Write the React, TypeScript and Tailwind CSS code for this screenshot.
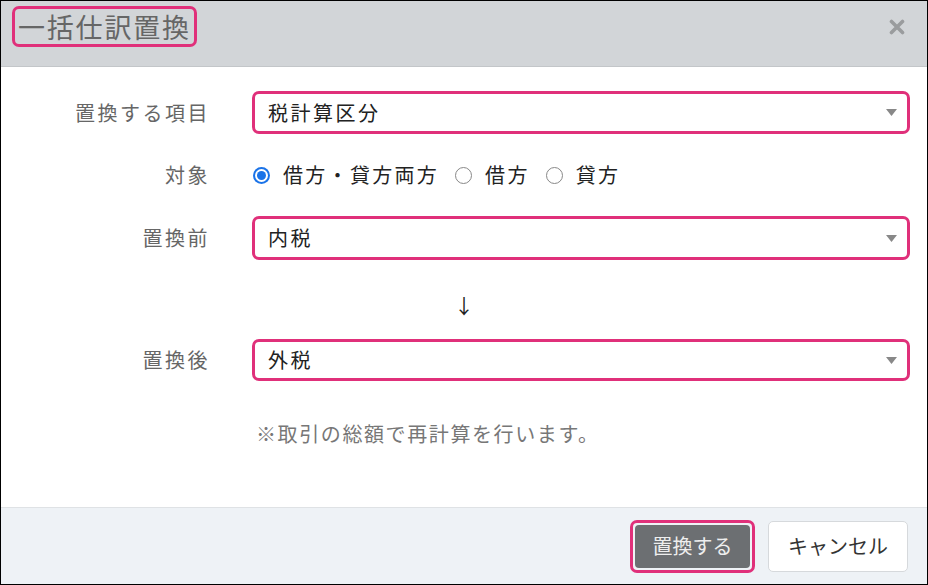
import React from "react";

const font = { fontFamily: '"Noto Sans CJK JP", "Noto Sans", sans-serif' };

function Select({ value, h }: { value: string; h: string }) {
  return (
    <div className={`flex-1 ${h} mr-[17px] border-[3px] border-[#e0307a] rounded-[7px] bg-white flex items-center pl-[13px] pr-[10px]`}>
      <span className="text-[20px] tracking-[2.5px] text-[#222] flex-1 leading-none">{value}</span>
      <svg width="11" height="7" viewBox="0 0 11 7"><path d="M0 0 L11 0 L5.5 7 Z" fill="#888" /></svg>
    </div>
  );
}

function Radio({ checked, label }: { checked?: boolean; label: string }) {
  return (
    <div className="flex items-center">
      {checked ? (
        <span className="w-[17px] h-[17px] rounded-full bg-[#1a73e8] flex items-center justify-center">
          <span className="w-[13px] h-[13px] rounded-full bg-white flex items-center justify-center">
            <span className="w-[9px] h-[9px] rounded-full bg-[#1a73e8]" />
          </span>
        </span>
      ) : (
        <span className="w-[17px] h-[17px] rounded-full border-[1.5px] border-[#888] bg-white" />
      )}
      <span className="ml-[13px] text-[20px] tracking-[2.3px] text-[#222]">{label}</span>
    </div>
  );
}

const label = "w-[209px] text-right text-[20px] tracking-[2.5px] text-[#666]";

export default function App() {
  return (
    <div style={font} className="w-[928px] h-[585px] border border-black bg-white flex flex-col overflow-hidden">
      <div className="h-[66px] bg-[#d2d5d8] border-b border-[#c3c6c9] flex items-start pt-[5px] pl-[11px] pr-[22px] shrink-0">
        <div className="border-[3px] border-[#e0307a] rounded-[7px] h-[41px] w-[185px] flex items-center pl-[3px]">
          <span className="text-[27px] text-[#666] leading-none tracking-[1.8px]">一括仕訳置換</span>
        </div>
        <div className="flex-1" />
        <svg className="mt-[13px]" width="16" height="16" viewBox="0 0 16 16">
          <path d="M2.5 2.5 L13.5 13.5 M13.5 2.5 L2.5 13.5" stroke="#9a9c9e" strokeWidth="3.6" strokeLinecap="round" />
        </svg>
      </div>
      <div className="flex-1 flex flex-col">
        <div className="flex items-center mt-[24px] h-[43px]">
          <div className={`${label} mr-[42px]`}>置換する項目</div>
          <Select value="税計算区分" h="h-[43px]" />
        </div>
        <div className="flex items-center h-[82px]">
          <div className={`${label} mr-[43px]`}>対象</div>
          <div className="flex items-center gap-[16px]">
            <Radio checked label="借方・貸方両方" />
            <Radio label="借方" />
            <Radio label="貸方" />
          </div>
        </div>
        <div className="flex items-center h-[44px]">
          <div className={`${label} mr-[42px]`}>置換前</div>
          <Select value="内税" h="h-[44px]" />
        </div>
        <div className="h-[79px] flex items-center justify-center pt-[12px]">
          <span className="text-[20px] text-[#222] leading-none">↓</span>
        </div>
        <div className="flex items-center h-[42px]">
          <div className={`${label} mr-[42px]`}>置換後</div>
          <Select value="外税" h="h-[42px]" />
        </div>
        <div className="mt-[43px] pl-[255px] text-[20px] tracking-[1.6px] text-[#777] leading-none">※取引の総額で再計算を行います。</div>
      </div>
      <div className="h-[77px] shrink-0 bg-[#eef2f6] border-t border-[#dfe2e5] flex items-center justify-end pr-[19px] gap-[13px]">
        <div className="border-[3px] border-[#e0307a] rounded-[7px] h-[53px] w-[125px] p-[2px]">
          <div className="w-full h-full bg-[#6c6f72] rounded-[4px] flex items-center justify-center text-[20px] text-[#eee]">置換する</div>
        </div>
        <div className="h-[51px] w-[140px] bg-white border border-[#d6d9dc] rounded-[5px] flex items-center justify-center text-[20px] text-[#333]">キャンセル</div>
      </div>
    </div>
  );
}
